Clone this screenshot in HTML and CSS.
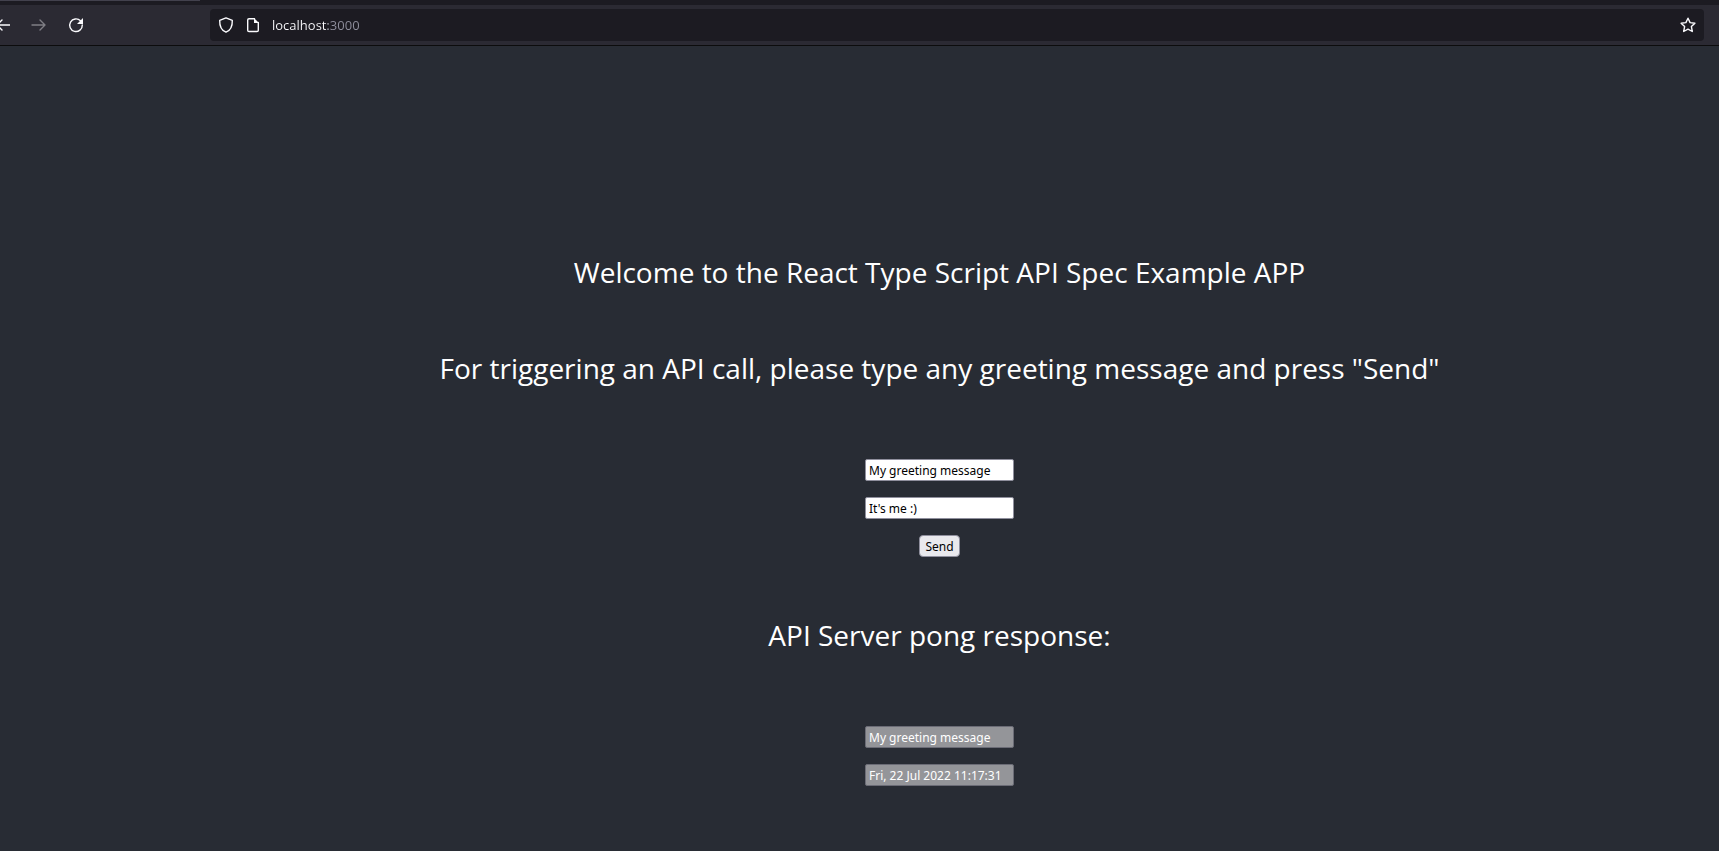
FILE: index.html
```html
<!DOCTYPE html>
<html lang="en">
  <head>
    <meta charset="utf-8">
    <title>React Type Script API Spec Example APP</title>
    <link rel="stylesheet" href="styles.css">
  </head>
  <body>
    <header class="browser">
      <div class="tabStrip"><div class="activeTab"></div></div>
      <div class="toolbar">
        <nav class="navButtons">
          <button type="button" class="iconBtn" aria-label="Back">
            <svg width="10" height="16" viewBox="6 0 10 16"><path d="M16 8H3M8 3 3 8l5 5"/></svg>
          </button>
          <button type="button" class="iconBtn" aria-label="Forward" disabled>
            <svg width="16" height="16" viewBox="0 0 16 16"><path d="M1 8h13M9 3l5 5-5 5"/></svg>
          </button>
          <button type="button" class="iconBtn" aria-label="Reload">
            <svg width="16" height="16" viewBox="0 0 16 16"><path d="M12.5 3.8A6.3 6.3 0 1 0 14.3 8"/><path class="solid" d="M15 1v6H9z"/></svg>
          </button>
        </nav>
        <div class="urlBar">
          <svg width="16" height="16" viewBox="0 0 16 16"><path d="M8 .9 14.3 3.4C14.5 9 12.2 13.4 8 15.2 3.8 13.4 1.5 9 1.7 3.4z"/></svg>
          <svg width="16" height="16" viewBox="0 0 16 16"><path d="M9.500 1.700H4Q2.700 1.700 2.700 3v10.200q0 1.300 1.300 1.300h8q1.300 0 1.300-1.300V5.500"/><path class="solid" d="M9 1v5h5z"/></svg>
          <input type="text" class="address" aria-label="Address" value="localhost:3000">
          <button type="button" class="iconBtn" aria-label="Bookmark this page">
            <svg width="16" height="16" viewBox="0 0 16 16"><path d="M8 1.200 10.100 5.600 14.900 6.200 11.400 9.600 12.300 14.500 8 12.200 3.700 14.500 4.600 9.600 1.100 6.200 5.900 5.600z"/></svg>
          </button>
        </div>
      </div>
    </header>
    <main class="app">
      <p>Welcome to the React Type Script API Spec Example APP</p>
      <p>For triggering an API call, please type any greeting message and press "Send"</p>
      <form class="fields">
        <input type="text" aria-label="Greeting message" value="My greeting message">
        <input type="text" aria-label="Sender" value="It's me :)">
        <button type="button" class="sendBtn">Send</button>
      </form>
      <p>API Server pong response:</p>
      <div class="fields">
        <input type="text" aria-label="Response message" value="My greeting message" disabled>
        <input type="text" aria-label="Response time" value="Fri, 22 Jul 2022 11:17:31" disabled>
      </div>
    </main>
  </body>
</html>
```
FILE: styles.css
```css
* {
  box-sizing: border-box;
}

body {
  margin: 0;
  min-height: 100vh;
  display: flex;
  flex-direction: column;
  background-color: #282c34;
  color: #fff;
  font-family: "Segoe UI", "Open Sans", "Noto Sans", sans-serif;
}

.browser {
  background-color: #2b2a33;
  border-bottom: 1px solid #0c0c0d;
}

.tabStrip {
  height: 5px;
  background-color: #1c1b22;
}

.activeTab {
  width: 200px;
  height: 1px;
  background-color: #42414d;
}

.toolbar {
  display: flex;
  align-items: center;
  height: 40px;
  padding-right: 15px;
}

.navButtons {
  display: flex;
  gap: 21px;
  width: 210px;
}

svg {
  display: block;
  flex: none;
  fill: none;
  stroke: #fbfbfe;
  stroke-width: 1.4;
  stroke-linecap: round;
  stroke-linejoin: round;
}

.solid {
  fill: #fbfbfe;
  stroke: none;
}

.iconBtn {
  padding: 0;
  border: none;
  background: none;
}

.iconBtn:disabled {
  opacity: 0.4;
}

.urlBar {
  flex: 1;
  display: flex;
  align-items: center;
  gap: 11px;
  height: 32px;
  padding: 0 8px;
  border-radius: 4px;
  background-color: #1c1b22;
}

/* host is bright, port is dimmed */
.address {
  flex: 1;
  padding: 0;
  border: none;
  outline: none;
  font: 13px "Segoe UI", "Open Sans", "Noto Sans", sans-serif;
  color: transparent;
  background: linear-gradient(to right, #fbfbfe 56px, #8f8f9d 56px);
  -webkit-background-clip: text;
  background-clip: text;
}

.app {
  flex: 1;
  display: flex;
  flex-direction: column;
  align-items: center;
  padding: 178px 0 0 160px;
  text-align: center;
}

.app p {
  margin: 28px 0;
  font-size: 28px;
  line-height: 40px;
}

.fields {
  display: flex;
  flex-direction: column;
  align-items: center;
  gap: 16px;
  margin: 43px 0 30px;
}

.fields input {
  width: 149px;
  height: 22px;
  padding: 1px 3px;
  border: 1px solid #8f8f9d;
  border-radius: 2px;
  background-color: #fff;
  color: #000;
  font: 12px Tahoma, "Noto Sans", sans-serif;
}

.fields input:disabled {
  border-color: #6b6c76;
  background-color: #949599;
  color: #fff;
}

.sendBtn {
  height: 22px;
  padding: 0 5px;
  border: 1px solid #8f8f9d;
  border-radius: 4px;
  background-color: #e9e9ed;
  color: #000;
  font: 12px Tahoma, "Noto Sans", sans-serif;
}
```
